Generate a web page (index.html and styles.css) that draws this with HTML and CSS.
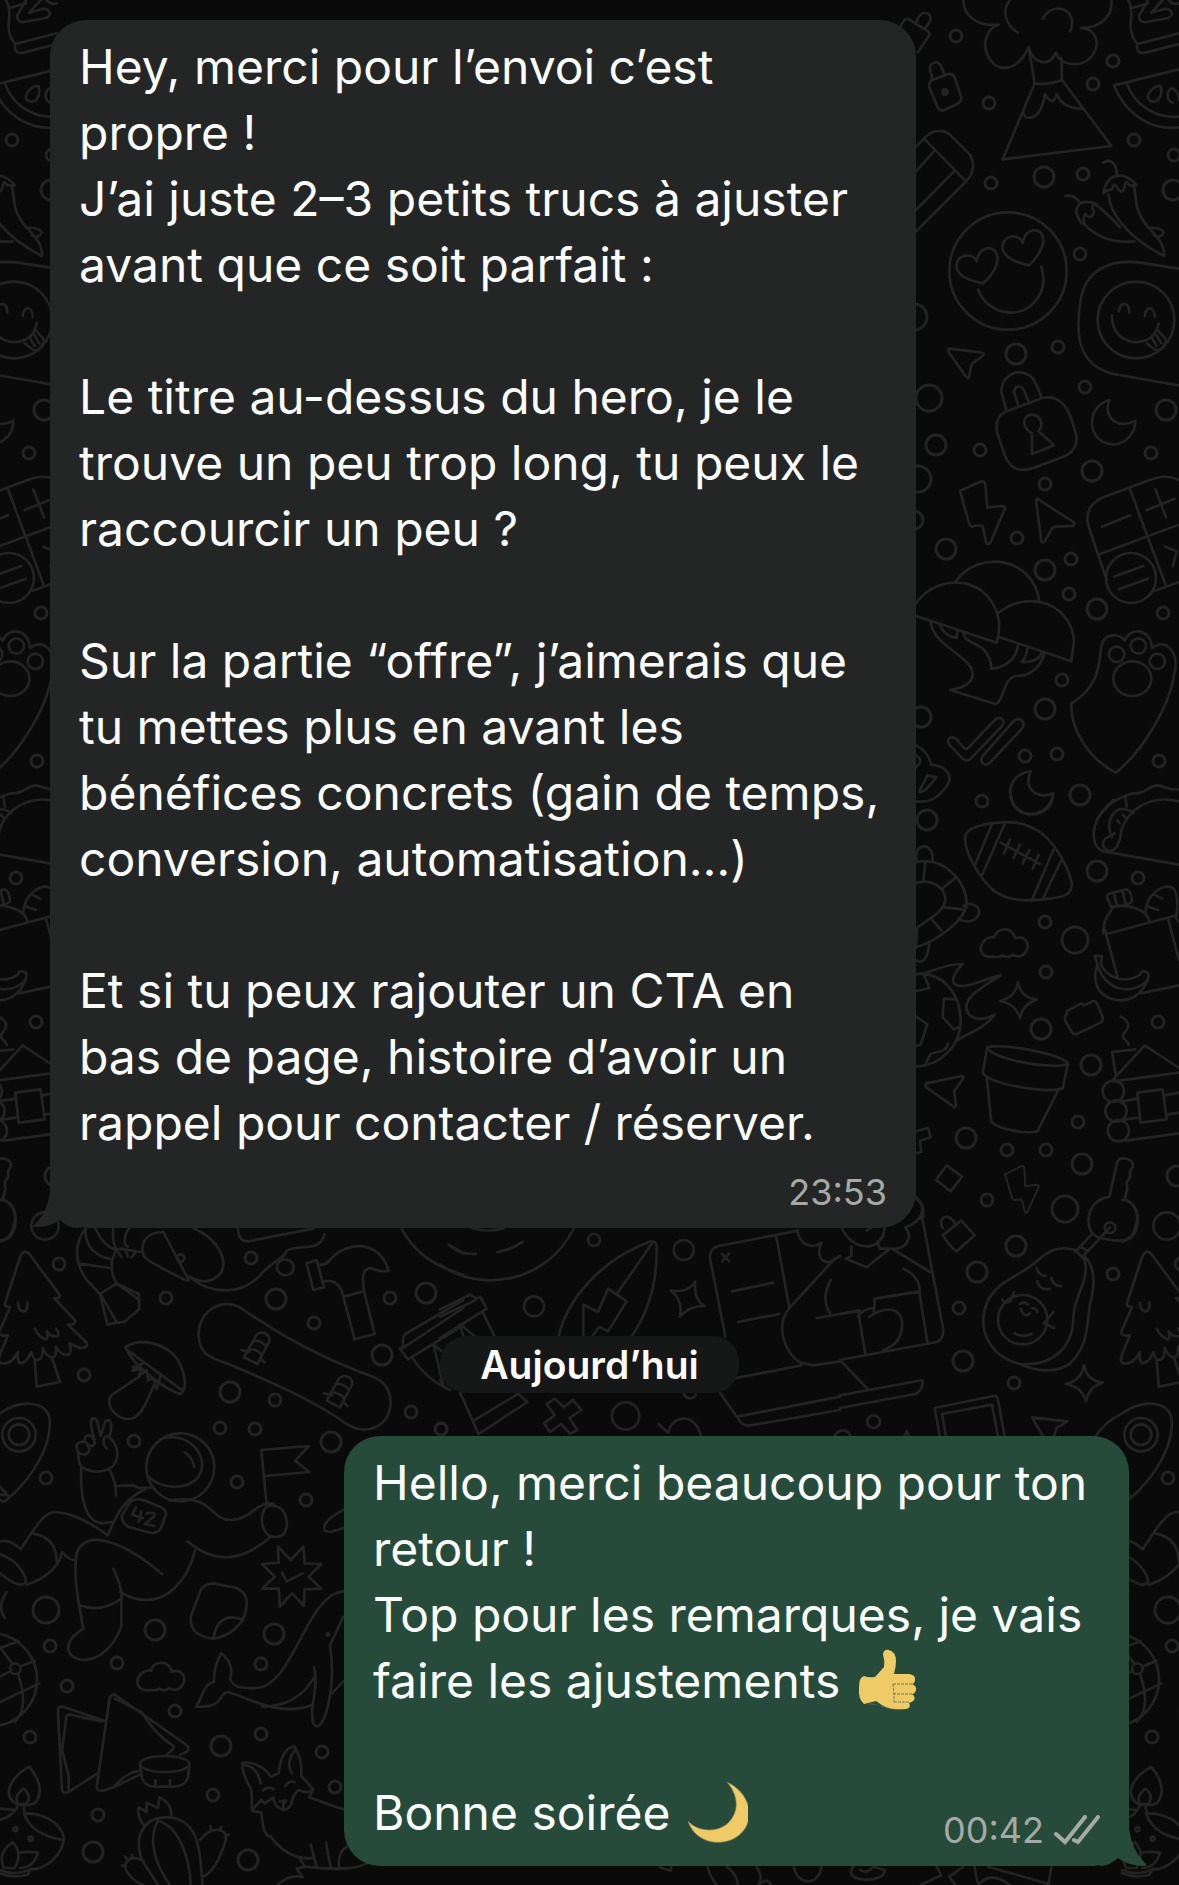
FILE: index.html
```html
<!DOCTYPE html>
<html lang="fr">
<head>
    <meta charset="UTF-8">
    <meta name="viewport" content="width=device-width, initial-scale=1.0">
    <title>Discussion</title>
    <link rel="stylesheet" href="styles.css">
</head>
<body>

    <!-- fond d'écran -->
    <svg class="wallpaper" viewBox="0 0 1179 1885" preserveAspectRatio="xMinYMin slice" aria-hidden="true">
        <defs>
            <path id="cloud" d="M0 0C-30 5-45-20-30-42C-22-56-5-60 5-58C10-85 55-95 68-55C95-65 112-40 102-20C95-2 75 5 60-6C50 4 35 2 30-4C20 2 10 2 0 0Z"/>
            <path id="star" d="M0-54Q8-8 56-2Q14 10 6 54Q-6 10-54 2Q-8-8 0-54Z"/>
            <path id="bolt" d="M-46-60L20-92Q28-94 30-84L34-12L80-18Q90-18 86-8L42 90Q36 98 32 88L20 40L-10 42Q-14 42-18 34Z"/>
        </defs>
        <g id="doodles">
            <!-- haut droite -->
            <g transform="translate(900 0) scale(.33333)">
                <path d="M2 78L12 62Q20 52 30 60L84 94Q92 100 86 108L54 156M48 72C60 25 90 35 92 54Q92 64 76 84"/>
                <path d="M96 240L146 222Q158 220 164 232L184 292Q184 306 172 312L132 330Q118 334 112 320L88 262Q86 246 96 240ZM98 238L90 212C88 186 112 178 124 200L134 224"/>
                <circle cx="135" cy="276" r="8" fill="#212121"/>
                <path d="M190 0C190 50 235 80 296 74C260 84 245 130 264 168C290 220 350 218 386 142C400 190 445 205 468 158C480 200 550 204 576 168C605 124 585 86 542 84C600 84 640 50 634 0M330 0C305 30 315 75 354 98M428 56C450 15 505 15 516 60Q518 80 510 94"/>
                <path d="M386 142L404 250L308 478L634 438L486 240L484 174M404 250Q446 256 486 240M370 334C368 362 410 362 426 318Q434 300 434 282Q446 300 456 304Q466 300 470 282C480 310 510 328 550 326"/>
                <path d="M48 440L72 416C95 388 130 386 152 406L204 458C226 480 224 520 198 544L48 694M72 416L198 544M48 514L104 452M48 630L162 514"/>
                <circle cx="324" cy="813" r="176"/>
                <path d="M250 850C195 840 166 820 170 792C176 764 216 756 230 784C234 754 260 734 282 750C308 778 282 820 250 850ZM388 796C332 786 302 760 308 736C314 704 356 700 368 728C374 696 400 682 420 696C444 720 420 765 388 796ZM234 868C262 940 350 960 400 910Q444 866 424 800"/>
                <path d="M146 1046L246 1058Q256 1062 248 1068L222 1086Q212 1094 212 1104L208 1128Q206 1138 198 1130L144 1054Z"/>
                <path d="M684 0Q698 20 692 70C690 95 700 118 712 132L837 100M712 132C708 155 718 162 736 158L837 132M696 24L744 10M744 0L718 46Q716 68 738 66L804 54Q822 46 812 32Q804 24 790 28L754 38L788 0M806 0Q820 16 837 10"/>
                <path d="M642 256L837 208M642 256C680 350 760 392 837 382M680 248C700 310 760 356 837 350M750 302C730 290 760 256 782 258C788 290 776 312 750 302ZM818 308C796 300 800 270 818 264Q836 276 837 300"/>
                <path d="M610 488C630 474 652 490 650 526M620 572L610 580C616 540 640 520 672 528Q700 540 710 556L688 556Q676 536 674 560Q666 590 650 560Q640 546 638 566ZM626 584C630 640 680 710 792 768C796 730 760 700 740 676C700 625 712 600 702 562M744 684Q780 680 792 698Q780 718 762 706M496 588Q522 582 542 610M556 676L544 668C510 620 540 594 590 612C560 620 590 630 580 642Q570 660 556 642Q546 660 556 676C590 710 640 730 704 724M586 614C620 638 640 660 660 682"/>
                <path d="M837 806L720 788C630 776 556 810 542 900C520 1030 550 1100 640 1122L837 1156"/>
                <circle cx="708" cy="960" r="115"/>
                <path d="M656 934C664 900 688 908 688 938M734 948C738 914 764 920 764 950M636 946C634 990 660 1020 700 1026C740 1028 768 1010 776 970M740 1030L766 1050C784 1056 802 1030 796 1016L772 990M756 1014L770 1038M768 1004L784 1030"/>
                <path d="M320 1234L304 1176C306 1110 380 1100 404 1144L426 1194M356 1220L342 1176C346 1152 368 1156 374 1176L388 1210M320 1234L426 1194C480 1184 500 1220 516 1262L530 1308C532 1340 514 1362 490 1370L400 1404C350 1420 330 1400 316 1370L292 1300C284 1260 300 1242 320 1234Z"/>
                <path d="M396 1362L396 1300C366 1284 364 1244 396 1244C424 1248 432 1274 416 1294L462 1336ZM628 1200C560 1220 560 1310 620 1330C660 1344 706 1310 706 1262C660 1290 606 1256 628 1200Z"/>
            </g>
            <!-- milieu droite -->
            <g transform="translate(900 420) scale(.33333)">
                <path d="M180 212L244 184Q254 182 256 192L262 262L308 258Q318 260 314 268L272 366Q264 378 258 366L248 318Q230 314 216 320Q208 318 206 306ZM412 236L520 306Q526 312 518 318L470 320Q458 320 454 330L434 364Q426 372 424 362L408 242Z"/>
                <path d="M837 180C800 165 780 170 755 178L610 232C570 250 554 280 566 320L620 480M690 208L796 492M600 402L837 314M764 512L837 486M606 320L690 286M740 270L824 236M766 208L798 292M796 380L830 394L818 440"/>
                <circle cx="693" cy="474" r="75"/>
                <path d="M642 470L730 438M656 508L744 476"/>
                <path d="M48 550C120 450 280 470 298 610Q298 640 290 668L48 588M166 486C230 390 400 405 418 546M296 578C380 510 510 545 522 660L514 724L300 652M92 606C100 680 220 710 218 764C216 790 190 804 150 810L286 852C310 850 310 770 350 768C390 770 424 740 434 698M120 616Q134 650 170 654L172 632M190 638C194 680 270 660 274 746C310 744 350 720 354 674M382 684Q380 710 366 726C390 728 420 720 426 696"/>
                <path d="M514 850C600 800 596 730 604 680C612 636 660 640 674 662C690 620 752 624 756 684C800 650 840 700 822 765C806 870 720 1000 648 1058C570 1020 510 930 514 850Z"/>
                <circle cx="650" cy="703" r="23"/><circle cx="715" cy="678" r="23"/><circle cx="772" cy="724" r="23"/>
                <ellipse cx="697" cy="776" rx="57" ry="52"/>
                <path d="M168 956Q150 944 144 962Q144 968 148 974L190 1018Q200 1026 210 1018L306 918Q316 904 304 896Q294 890 284 900L204 984Q198 990 192 984ZM248 1008L340 904Q354 892 366 902Q376 914 364 928L270 1028Q256 1040 246 1028Q242 1020 248 1008Z"/>
                <path d="M48 976Q84 994 94 1034C150 1040 160 1076 136 1104C110 1136 90 1148 48 1144M82 1066L110 1072L76 1110Q60 1120 58 1114ZM48 1006Q74 1020 48 1042"/>
                <path d="M392 1054C320 1060 310 1150 370 1178C410 1194 460 1170 460 1120C410 1140 370 1106 392 1054Z"/>
                <path d="M590 1200C620 1150 660 1130 700 1120C740 1122 740 1100 772 1096C800 1100 810 1112 837 1108M676 1130L680 1160"/>
            </g>
            <!-- bas droite -->
            <g transform="translate(900 800) scale(.33333)">
                <path d="M837 194L610 154C570 140 570 70 620 20L640 0M837 4C740-20 680 40 664 90C660 140 640 160 620 150Q600 134 616 116L644 100M700 40C650 0 610 60 636 112M652 62L660 70M668 44L680 56"/>
                <path d="M334-10C340 60 440 60 458-10"/>
                <path d="M196 108C200 90 220 82 250 74C320 60 370 64 420 96C460 126 500 186 516 250C516 280 500 290 450 296C380 306 310 306 264 256C230 216 190 150 196 108ZM276 72L226 192M314 72L246 226M460 150L396 300M484 180L428 298M302 128L420 192M330 118L312 160M360 134L340 174M388 150L368 190M416 164L398 206"/>
                <path d="M48 186C130 170 200 240 200 316C190 360 120 420 48 442M48 250C90 234 136 260 136 300C130 340 80 360 52 382L48 442M76 186L70 246M168 232L126 266M134 322L188 328M94 356L124 392M50 180C40 126 104 124 98 184M190 318C210 304 244 316 236 344C220 372 190 366 176 356M88 432Q82 480 64 484L48 482"/>
                <use href="#cloud" x="278" y="470"/>
                <path d="M48 522C80 526 130 490 188 492C160 520 140 560 190 558C230 554 260 534 302 526C250 560 190 590 200 630C210 664 250 662 284 644C250 690 200 700 174 720M48 522C130 516 180 580 182 660C182 740 120 796 48 800M48 574L88 564L72 524M168 598L132 596L128 652L162 688L176 682M48 650L82 672L62 734L48 738M144 730C140 760 100 756 92 762L78 788"/>
                <use href="#star" x="354" y="601"/>
                <path d="M620 402L830 346M610 400C608 350 634 340 640 318C690 312 738 330 748 362M612 380L654 536M826 350L837 366M804 356L837 480M722 580L837 556M736 336C740 280 790 250 818 264Q837 280 830 346M762 284L786 296M746 320L774 330M622 296Q618 284 632 280L680 268Q694 272 696 304Q690 314 634 322ZM642 280L650 314M668 272L676 308M584 468L606 468L602 492C620 530 670 556 720 524C722 508 746 512 746 528C730 590 680 612 632 596C590 580 576 540 592 494ZM594 500C620 570 690 590 744 540"/>
                <path d="M500 634L544 610L552 616L578 604Q588 602 592 612L608 652Q610 662 602 668L530 702Q518 704 514 694L496 662Q492 648 500 644Z"/>
                <path d="M262 742C310 730 480 760 504 790C480 812 270 780 262 742ZM262 742L248 818C270 852 430 880 488 866L504 790M260 830L274 966C300 990 380 1002 412 994L474 872"/>
                <path d="M662 650C700 670 680 690 672 700C664 720 680 716 686 734M648 828L636 756L706 748M640 838L734 736L837 804M640 844L837 818M664 904L712 896M664 960L720 952M676 1022L837 1000M794 886L837 878M800 944L837 938M712 878L788 868L800 958L722 968Z"/>
                <circle cx="640" cy="874" r="32"/><circle cx="648" cy="933" r="32"/><circle cx="655" cy="992" r="32"/>
                <path d="M78 850L186 828Q192 830 188 838L166 868Q160 872 164 884L168 918Q164 926 158 918L76 860ZM48 994L84 984L92 1012L60 1022L64 1056L48 1060M140 1096L186 1130L152 1174L108 1140Z"/>
                <use href="#bolt" transform="translate(350 1168) scale(.76)"/>
                <path d="M628 1190L652 1086Q660 1070 684 1078Q702 1084 698 1100L690 1114L690 1132L680 1146L682 1166L674 1198C730 1220 718 1300 688 1316Q660 1330 590 1310C550 1290 556 1200 628 1190Z"/>
                <circle cx="630" cy="1283" r="16"/>
                <path d="M48 1190Q80 1220 66 1260"/>
            </g>
            <!-- avocat et portable -->
            <g transform="translate(840 1180) scale(.33333)">
                <path d="M308 166L364 122L404 166L350 214Q340 212 308 166ZM308 144C290 110 330 94 346 134M758 160L706 214M810 142L730 228M706 214L724 200L742 214L730 228"/>
                <path d="M706 210C650 194 620 216 590 244C540 290 470 300 440 370C410 450 450 530 540 552C640 560 700 500 700 410C702 350 750 300 734 240ZM730 226C770 260 764 320 750 370C740 440 744 500 690 550C650 580 590 576 540 552"/>
                <circle cx="548" cy="419" r="74"/>
                <path d="M590 264Q594 286 618 288M634 294Q642 320 664 318M592 304Q600 334 630 326M486 358Q496 374 512 362L522 336M540 372Q552 362 564 374M542 386Q552 416 570 400M576 384Q590 384 592 396M524 460Q550 474 574 462M640 396L612 430L642 444"/>
                <use href="#star" x="732" y="610"/>
                <path d="M284 684L460 648Q472 646 474 660L494 770M284 684L300 770M318 770L306 702L456 674L474 770M576 712L682 724L650 744L642 770M576 712L610 770"/>
                <path d="M226 54C260 70 254 124 196 142C220 170 200 210 156 206L270 276M246 110L310 450Q310 480 290 486L0 540M150 206L120 206L112 186M150 206L80 262L18 236L34 228V200M0 130C30 220 130 220 134 142M80 152L94 142M190 266C240 290 240 320 240 350L262 486M240 334L104 356L102 400M0 402L54 392L76 522M54 410Q70 386 102 384M88 410C150 370 190 390 186 440C184 480 160 500 130 510M0 540L84 628M0 646L248 600Q250 630 226 642L0 684"/>
            </g>
            <g transform="translate(440 1200) scale(.33333)">
                <path d="M0 194C120 280 320 250 402 84M26 134Q60 164 108 162M172 156Q210 150 248 126M96 84Q140 98 190 86M356 410C380 300 480 180 632 124Q650 122 650 142C652 240 630 330 574 410M636 130L532 280M430 410V314L474 336L504 266L560 304L504 394L478 380L456 410"/>
                <path d="M692 272Q744 280 766 244Q760 300 794 318Q750 316 720 350Q730 300 692 272ZM856 410L810 174Q808 146 836 138L1074 92M1008 106L1048 322M846 162L868 184M868 160L846 184M876 274L1000 248M894 366L1018 342M1186 174L1050 322C1000 380 1040 470 1084 488V496L880 536M1072 90C1080 140 1120 146 1144 128C1130 160 1140 190 1170 186L1200 168M1172 240Q1140 300 1174 346M1130 354L1260 332M840 578L900 664Q908 678 930 676L1200 630M892 650L1200 590M1084 488L1120 496L1200 484"/>
                <path d="M0 328L90 284L110 296L120 290L140 326L0 414M0 350L108 300M128 336L164 410M60 374L70 410M62 374L106 410M60 578L116 702L262 606L232 578M104 660L230 584M0 540L12 560"/>
                <path d="M344 596L372 622L398 600L424 630L388 654L412 690L390 702L364 672L330 696L312 670L344 646L320 612ZM656 672L684 698C700 640 766 640 782 706"/>
                <circle cx="462" cy="120" r="18"/><circle cx="731" cy="150" r="30"/><circle cx="282" cy="319" r="30"/><circle cx="557" cy="648" r="41"/><circle cx="750" cy="576" r="19"/><circle cx="4" cy="688" r="18"/><circle cx="1301" cy="665" r="19"/><circle cx="1208" cy="716" r="25"/>
                <path d="M1392 712L1400 692L1408 712"/>
            </g>
            <!-- sapin, planche, astronaute -->
            <g transform="translate(0 1200) scale(.33333)">
                <path d="M62 166Q74 146 88 162L180 286Q180 296 162 294L226 362Q226 376 204 374L260 428Q266 444 240 444L208 430Q218 460 202 464Q182 466 168 440Q170 474 154 472Q138 468 128 444Q130 480 110 480Q100 478 94 456Q80 490 60 490Q50 480 54 456Q30 500 0 488C-12 480 10 440 24 406Q-10 410 0 390L30 322Q10 320 16 306ZM54 308C54 340 86 346 82 308M104 386Q120 416 138 418Q146 414 140 394Q156 414 174 408Q178 396 168 386M104 480L110 560L180 546L156 474"/>
                <path d="M0 0C40 0 54 50 40 80Q34 116 0 124M258 84C220 130 224 190 260 240L300 282L322 374L352 368L372 366L418 328L416 282L350 250L300 282M258 84C250 140 290 170 334 178M286 84Q310 140 350 150M350 150C330 180 330 220 350 250M236 190L330 204M340 84Q336 130 350 150L360 146L410 154M390 84C370 100 370 140 384 140M350 150L364 170M376 150L384 170M410 154L394 172M350 250L418 300M302 284L350 366M410 154L430 156M490 96L566 240M490 96C430 96 420 140 432 168Q440 184 560 242M580 84C660 120 690 190 656 226Q620 260 568 230C640 290 730 280 780 226C830 170 850 180 860 152C900 130 960 160 974 102M714 84Q714 124 744 124L940 86"/>
                <circle cx="135" cy="78" r="41"/><circle cx="542" cy="174" r="11"/><ellipse cx="856" cy="202" rx="25" ry="24"/>
                <path d="M920 190L950 180L972 262L940 270ZM956 194Q974 198 990 180C1040 120 1140 120 1166 212Q1150 218 1110 204C1080 210 1090 250 1092 274L1124 402L1064 418L1030 290C1020 240 990 240 970 244M1030 290L1092 274"/>
                <path d="M1206 88C1240 150 1300 200 1390 224M1350 136L1390 160M1390 300L1216 402Q1206 410 1210 440L1200 446L1224 478L1390 376M1212 442L1390 324M1236 472Q1280 540 1350 570M1300 432L1330 556M1300 432L1332 460"/>
                <path d="M720 322C660 290 590 340 596 410C600 470 640 474 680 490C800 540 940 600 1040 672C1100 710 1170 680 1172 606C1170 540 1120 530 1080 516C960 470 830 400 720 322Z"/>
                <path id="binding" d="M732 472L770 404C790 390 812 404 808 424L772 492ZM748 448Q770 446 786 466M760 422Q784 420 798 440M724 450L748 456M780 474L794 488"/>
                <use href="#binding" x="248" y="130"/>
                <path d="M376 442C420 410 500 430 534 480C560 530 560 570 540 582C500 570 400 500 376 442ZM382 450L548 572M420 528L334 586C310 620 360 670 400 654C430 640 450 580 466 546M398 502L430 490L398 512L424 506L416 530L440 510L444 540L460 536L470 568L482 526"/>
                <path d="M0 640C60 600 130 600 148 650C160 740 90 840 20 900Q10 908 0 900Q-20 880 24 886L0 860M0 640C-80 680-100 740-120 810M-120 810L0 900"/>
                <circle cx="57" cy="704" r="50"/><circle cx="57" cy="704" r="31"/>
                <path d="M244 800C230 780 240 760 230 744C226 730 250 716 262 732C280 760 250 770 238 758M254 718C256 700 280 702 284 730Q280 744 262 732M284 722C260 640 284 650 292 664L302 708L316 664C336 650 338 680 328 712C310 700 304 730 320 746M328 712C370 750 350 800 320 810Q280 824 244 800M244 800C240 880 250 970 310 970L334 966M328 808Q350 850 348 886M352 858L400 856L416 864L460 862"/>
                <circle cx="541" cy="802" r="102"/>
                <path d="M492 714C570 700 610 760 606 800C600 870 490 880 442 826M554 756Q580 776 582 800M784 750L926 738L886 782L928 816L796 828M784 750L800 914"/>
                <path d="M392 904Q410 894 430 900L480 920Q500 930 498 944L482 986Q470 1002 450 998L384 980Q364 966 366 946ZM408 922L396 944L428 954M424 934L416 966M440 940Q466 934 464 948L434 972L462 978"/>
            </g>
            <g transform="translate(0 1500) scale(.33333)">
                <path d="M0 124Q30 116 62 148C100 90 130 40 160 36C210 36 260 60 324 106C350 40 370 0 440-36M510 2C640-20 630 60 690 60C750 60 770 10 804 10Q820 8 826 18M792 30Q800 14 820 18C870 20 870 104 840 108C790 124 776 60 792 30M812 110C720 190 640 190 562 124M586 150C560 250 500 300 440 300Q400 300 360 276M340 206Q370 270 364 300V380C340 440 300 480 250 480C200 476 180 430 250 386C230 280 220 220 230 160C260 80 380 130 486 222M240 316Q300 340 364 296M226 180Q210 184 186 156C180 200 130 240 80 254M100 100C150 110 170 140 170 184M0 162C50 180 76 220 78 246Q60 270 0 220"/>
                <path d="M834 140L872 180L910 140L914 190L964 192L926 230L964 266L914 268L912 318L876 280L840 320L836 266L786 266L824 230L786 192L836 188ZM846 218L860 244L908 220M1030 30Q970 60 972 88Q980 104 1030 84"/>
                <path d="M604 266Q620 250 640 250L710 264C740 280 744 300 738 330C730 380 680 410 640 416C590 410 570 390 572 350ZM640 414C650 360 680 340 730 360"/>
                <path d="M20 276Q-10 320 14 354M0 402A140 140 0 0 1 0 676M-22 676A140 140 0 0 1-30 404M0 444L56 424M0 442L36 490M60 500L104 482M0 530L34 512M54 520C80 600 70 640 44 666M0 606L118 550"/>
                <circle cx="46" cy="506" r="16"/>
                <use href="#cloud" x="448" y="570"/>
                <path d="M664 460C690 480 700 510 690 534C700 570 740 564 770 564C880 560 920 280 1030 274M664 460Q640 500 642 546C610 550 610 590 588 620C680 624 650 580 684 576C760 600 840 650 934 616M786 620C860 620 910 590 944 530M942 502C960 560 920 640 944 676C970 700 1010 570 990 436L1030 350M996 580L1030 544"/>
                <circle cx="984" cy="403" r="4"/>
                <path d="M316 664L190 620Q172 618 174 636L186 870Q190 880 202 878L296 818M306 664L210 644Q196 644 198 660L186 750L206 826V870M344 584Q330 584 328 600L290 860Q290 874 308 872L340 862L420 824M344 584L558 734Q572 744 560 756L540 764M344 596L424 636C460 690 480 710 520 738Q524 746 500 764M340 862C370 830 390 816 418 812"/>
                <ellipse cx="494" cy="792" rx="74" ry="24"/>
                <path d="M420 796L426 832Q434 860 464 860H520Q556 860 564 832L568 796M466 840V858M510 840V858"/>
                <path d="M88 800C120 840 130 880 104 910Q80 920 50 912C10 890 20 840 88 800ZM70 866C90 880 90 900 78 912H54Q40 890 70 866ZM0 960Q40 950 54 916M72 912Q70 940 78 940C120 940 180 960 192 1014C190 1060 140 1110 90 1108M72 940C90 990 130 1010 190 1020M0 926L44 930M0 1110Q50 1130 94 1106L82 1124Q40 1136 0 1120M38 1026Q70 1060 44 1104H12Q-10 1060 38 1026ZM54 1060Q80 1052 114 1058Q100 1104 60 1104"/>
                <circle cx="46" cy="988" r="6"/><circle cx="92" cy="1016" r="6"/>
                <path d="M432 976Q410 950 416 922L440 936V908L474 924L478 892Q516 910 514 946M608 1155C600 1060 600 970 520 954C430 940 400 1010 426 1080L474 1155M474 962C440 1020 470 1100 510 1155M474 962C540 980 570 1080 572 1155M600 1020C640 970 690 990 676 1024Q650 1110 610 1130M432 1084C390 1060 360 1090 384 1120Q396 1140 430 1155M632 978V990M664 980L658 992M686 1004L674 1010M366 1096L378 1100M376 1070L384 1082M396 1064V1076"/>
                <path d="M836 820C840 770 860 740 884 740C906 780 904 800 904 828L940 868Q930 884 896 870C860 900 890 920 850 930Q820 920 820 892L794 910L784 900L756 930C754 890 760 870 744 850Q724 810 728 788C770 784 800 810 812 830ZM736 796Q772 800 782 850M884 752Q856 790 876 820M788 872Q804 856 820 868M856 858Q870 840 884 846M840 904L858 902L850 912V926M936 876L928 892Q980 912 1030 928M756 932L784 938C790 1000 800 1010 812 1010C850 1060 890 1080 940 1074M932 1034L950 1100M978 1028L992 1104M900 1076L914 1100L890 1106L908 1132Q870 1120 832 1155M914 1100C1000 1110 1060 1110 1100 1090M1018 1104Q1010 1060 1040 1040"/>
            </g>
            <!-- bas, sous la bulle verte -->
            <g transform="translate(660 1760) scale(.33333)">
                <path d="M0 322L32 332L34 320M142 320Q150 350 170 375M200 320Q230 340 234 375M290 320Q310 350 296 375Q320 350 334 375M402 320C410 380 480 376 484 320M580 320C540 370 680 370 674 330L640 320Q620 344 600 330M830 320L844 346L782 375M868 350L910 320M868 350L886 375M944 320Q946 350 956 375M984 320L1166 372L1174 320M956 375Q990 330 1050 375"/>
            </g>
            <g class="dots">
                <circle cx="956" cy="36" r="6"/><circle cx="1113" cy="61" r="6"/><circle cx="1093" cy="84" r="6"/><circle cx="989" cy="103" r="6"/><circle cx="1134" cy="140" r="6"/><circle cx="1174" cy="155" r="6"/>
                <circle cx="1044" cy="177" r="10"/><circle cx="1083" cy="174" r="6"/><circle cx="991" cy="183" r="6"/><circle cx="1173" cy="190" r="10"/><circle cx="1080" cy="254" r="6"/><circle cx="914" cy="317" r="13"/>
                <circle cx="1016" cy="354" r="10"/><circle cx="1058" cy="347" r="6"/><circle cx="1085" cy="387" r="6"/><circle cx="929" cy="398" r="13"/><circle cx="1166" cy="410" r="10"/>
                <circle cx="936" cy="445" r="10"/><circle cx="980" cy="450" r="6"/><circle cx="1151" cy="453" r="6"/><circle cx="1092" cy="471" r="10"/><circle cx="1045" cy="484" r="6"/><circle cx="918" cy="479" r="13"/><circle cx="914" cy="520" r="9"/>
                <circle cx="1017" cy="538" r="6"/><circle cx="946" cy="549" r="10"/><circle cx="1045" cy="570" r="10"/><circle cx="1071" cy="559" r="6"/><circle cx="1069" cy="594" r="6"/><circle cx="1097" cy="609" r="10"/><circle cx="1163" cy="613" r="6"/>
                <circle cx="1062" cy="680" r="6"/><circle cx="1045" cy="709" r="10"/><circle cx="921" cy="717" r="10"/><circle cx="1025" cy="756" r="6"/><circle cx="1057" cy="754" r="6"/><circle cx="1159" cy="761" r="6"/><circle cx="1080" cy="795" r="10"/><circle cx="982" cy="801" r="6"/>
                <circle cx="927" cy="820" r="10"/><circle cx="1097" cy="871" r="10"/><circle cx="1138" cy="878" r="6"/><circle cx="1045" cy="922" r="6"/><circle cx="1075" cy="940" r="13"/><circle cx="1046" cy="972" r="6"/>
                <circle cx="1041" cy="1029" r="10"/><circle cx="1158" cy="1022" r="6"/><circle cx="1091" cy="1065" r="10"/><circle cx="1078" cy="1122" r="6"/><circle cx="966" cy="1138" r="10"/><circle cx="1007" cy="1150" r="6"/><circle cx="1046" cy="1150" r="6"/><circle cx="1082" cy="1164" r="10"/><circle cx="1177" cy="1176" r="10"/>
                <circle cx="987" cy="1200" r="6"/><circle cx="1065" cy="1209" r="13"/><circle cx="1016" cy="1246" r="10"/><circle cx="977" cy="1272" r="10"/><circle cx="959" cy="1308" r="6"/><circle cx="1113" cy="1274" r="6"/><circle cx="963" cy="1361" r="10"/><circle cx="1014" cy="1383" r="6"/>
                <circle cx="59" cy="1264" r="6"/><circle cx="166" cy="1298" r="6"/><circle cx="251" cy="1258" r="6"/><circle cx="276" cy="1299" r="10"/><circle cx="314" cy="1323" r="6"/><circle cx="390" cy="1298" r="6"/><circle cx="426" cy="1293" r="10"/><circle cx="382" cy="1355" r="10"/>
                <circle cx="84" cy="1375" r="6"/><circle cx="230" cy="1392" r="10"/><circle cx="275" cy="1400" r="6"/><circle cx="220" cy="1428" r="6"/><circle cx="255" cy="1429" r="6"/><circle cx="134" cy="1441" r="6"/><circle cx="331" cy="1442" r="10"/><circle cx="411" cy="1412" r="6"/><circle cx="441" cy="1429" r="6"/>
                <circle cx="46" cy="1478" r="6"/><circle cx="237" cy="1482" r="6"/><circle cx="306" cy="1500" r="6"/><circle cx="46" cy="1610" r="13"/><circle cx="155" cy="1630" r="10"/><circle cx="50" cy="1646" r="6"/><circle cx="274" cy="1634" r="10"/><circle cx="117" cy="1663" r="6"/><circle cx="261" cy="1664" r="6"/><circle cx="67" cy="1686" r="6"/>
                <circle cx="175" cy="1711" r="6"/><circle cx="30" cy="1737" r="6"/><circle cx="261" cy="1734" r="6"/><circle cx="221" cy="1746" r="10"/><circle cx="322" cy="1752" r="6"/><circle cx="335" cy="1787" r="6"/><circle cx="213" cy="1795" r="6"/><circle cx="98" cy="1815" r="6"/><circle cx="93" cy="1852" r="10"/><circle cx="248" cy="1860" r="10"/>
            </g>
        </g>
        <!-- le motif se répète tous les 1122px -->
        <use href="#doodles" x="-1122"/>
        <use href="#doodles" x="1122"/>
    </svg>

    <main class="chat">
        <!-- message reçu -->
        <article class="bubble bubble-in">
            <p>Hey, merci pour l’envoi c’est propre&nbsp;!<br>J’ai juste 2–3 petits trucs à ajuster avant que ce soit parfait :</p>
            <p>Le titre au-dessus du hero, je le trouve un peu trop long, tu peux le raccourcir un peu ?</p>
            <p>Sur la partie “offre”, j’aimerais que tu mettes plus en avant les bénéfices concrets (gain de temps, conversion, automatisation…)</p>
            <p>Et si tu peux rajouter un CTA en bas de page, histoire d’avoir un rappel pour contacter / réserver.</p>
            <div class="meta"><time datetime="23:53">23:53</time></div>
            <svg class="tail" viewBox="0 0 46 50" aria-hidden="true">
                <path d="M17 0H46V50H42Q34 49 27 42Q16 50 1 49Q-1 48 2 46Q15 34 17 12Z"/>
            </svg>
        </article>

        <h2 class="day">Aujourd’hui</h2>

        <!-- message envoyé -->
        <article class="bubble bubble-out">
            <p>Hello, merci beaucoup pour ton retour&nbsp;!<br>Top pour les remarques, je vais faire les ajustements
                <svg class="emoji" viewBox="0 0 60 62" role="img" aria-label="pouce levé">
                    <path d="M8 55C20 52 24 61 42 61Q54 61 52 51V54Q52 60 43 60L20 56Z" fill="#646a60"/>
                    <path d="M25 5Q26 0 31 1Q38 3 38 12Q38 18 36 25H51Q58 26 57 31Q57 34 54 35Q59 37 58 41Q57 45 54 45Q58 48 56 51Q55 53 51 54Q54 60 46 60H38Q28 60 18 52L6 55Q0 50 1 39Q1 28 6 27Q10 29 17 28L26 18Q27 12 25 5Z" fill="#eecb67"/>
                    <path d="M35 35H54M35 45H54M36 53H52M35 35L36 45V53" fill="none" stroke="#77765d" stroke-dasharray="3 1"/>
                </svg>
            </p>
            <div class="last-line">
                <p>Bonne soirée
                    <svg class="emoji" viewBox="0 0 60 62" role="img" aria-label="lune">
                        <path d="M39 1C67 14 69 48 43 59C24 66 5 57 0 40C10 51 29 52 40 42C52 30 50 14 39 1Z" fill="#eecb67" stroke="#817a62" stroke-width=".7"/>
                    </svg>
                </p>
                <div class="meta">
                    <time datetime="00:42">00:42</time>
                    <svg class="checks" viewBox="0 0 46 30" role="img" aria-label="distribué">
                        <path d="M2 19L11 27L31 2M20 25L24 27L44 2"/>
                    </svg>
                </div>
            </div>
            <svg class="tail" viewBox="0 0 46 50" aria-hidden="true">
                <path d="M29 0H0V50H2Q10 49 18 42Q28 50 45 50Q48 49 44 46Q31 32 29 12Z"/>
            </svg>
        </article>
    </main>

</body>
</html>
```

FILE: styles.css
```css
* {
    box-sizing: border-box;
}

body {
    position: relative;
    margin: 0;
    background-color: #0a0a0a;
    color: #fafcfb;
    font-family: Inter, "Liberation Sans", sans-serif;
    font-size: 48px;
    line-height: 66px;
}

p, h2 {
    margin: 0;
}

/* motif derrière les messages */
.wallpaper {
    position: absolute;
    top: 0;
    left: 0;
    width: 100%;
    height: 100%;
    fill: none;
    stroke: #232323;
    stroke-width: 8;
    stroke-linecap: round;
    stroke-linejoin: round;
}

.dots {
    stroke-width: 3;
}

.chat {
    position: relative;
    display: flex;
    flex-direction: column;
    padding: 20px 50px 19px;
}

.bubble {
    position: relative;
    padding: 14px 29px;
    border-radius: 36px;
}

.bubble-in {
    align-self: flex-start;
    width: 80.25%;
    background-color: #242625;
    fill: #242625;
}

.bubble-out {
    align-self: flex-end;
    width: 72.75%;
    padding-bottom: 20px;
    background-color: #274b3a;
    fill: #274b3a;
}

.bubble-in p + p,
.last-line {
    margin-top: 66px;
}

.last-line {
    display: flex;
    justify-content: space-between;
    align-items: flex-end;
}

.meta {
    display: flex;
    justify-content: flex-end;
    align-items: center;
    gap: 10px;
    color: #a5aaa7;
    font-size: 36px;
    line-height: 44px;
}

.bubble-in .meta {
    margin-top: 14px;
}

.bubble-out .meta {
    margin-bottom: -6px;
}

.checks {
    width: 46px;
    height: 30px;
    fill: none;
    stroke: #a5aaa7;
    stroke-width: 4;
    stroke-linecap: round;
}

.emoji {
    width: 60px;
    height: 62px;
    margin: -8px 0 -8px 4px;
    vertical-align: -5px;
}

/* pointe de la bulle */
.tail {
    position: absolute;
    bottom: 0;
    width: 46px;
    height: 50px;
}

.bubble-in .tail {
    left: -17px;
}

.bubble-out .tail {
    right: -17px;
}

.day {
    align-self: center;
    margin: 108px 0 43px;
    padding: 0 40px;
    border-radius: 26px;
    background-color: #161717;
    font-size: 39px;
    font-weight: 600;
    line-height: 57px;
}
```
